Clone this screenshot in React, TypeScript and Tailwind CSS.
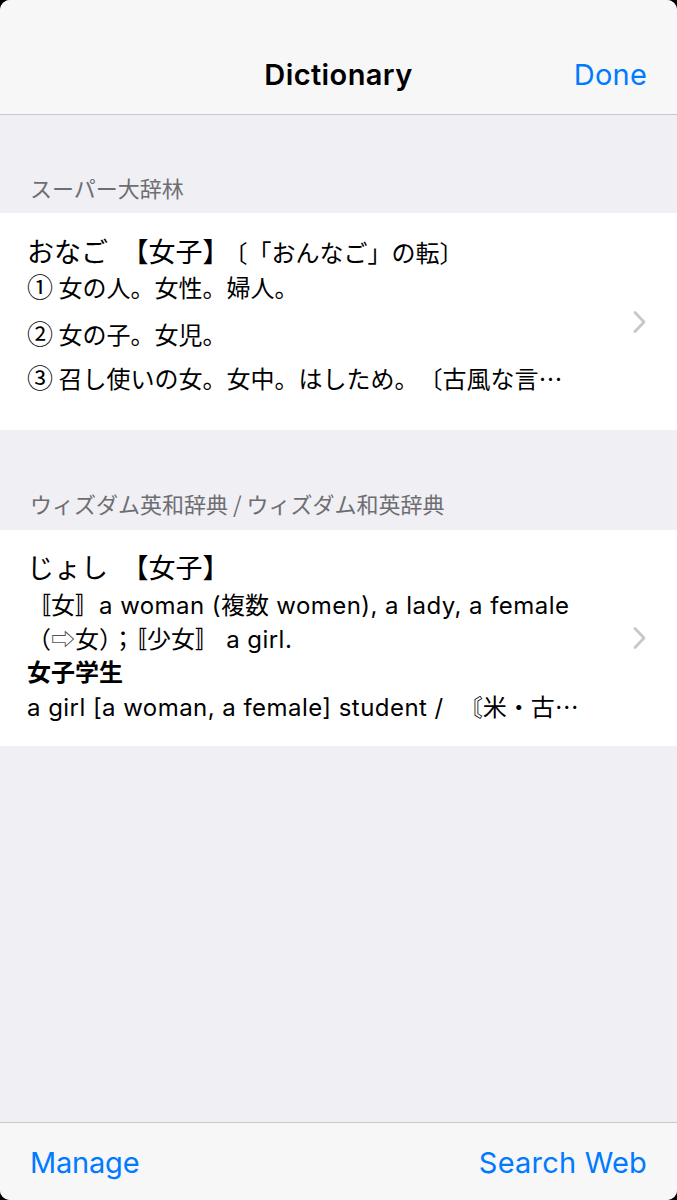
import React from "react";

const jp = { fontFamily: '"Noto Sans CJK JP", sans-serif', letterSpacing: "normal" } as const;

function Chevron() {
  return (
    <svg width="15" height="24" viewBox="0 0 15 24" fill="none" className="shrink-0">
      <path d="M3 2.5 L12 12 L3 21.5" stroke="#c7c7cc" strokeWidth="2.8" strokeLinecap="round" strokeLinejoin="round" />
    </svg>
  );
}

function Num({ n }: { n: string }) {
  return <span className="text-[26px] leading-[34px]">{n}</span>;
}

export default function App() {
  return (
    <div className="bg-black w-[677px] h-[1200px]" style={{ fontFamily: 'Inter, "Noto Sans CJK JP", sans-serif' }}>
      <div className="w-[677px] h-[1200px] rounded-[10px] overflow-hidden flex flex-col bg-[#efeff4]">
        {/* Nav bar */}
        <div className="h-[115px] shrink-0 bg-[#f7f7f8] border-b border-[#c8c7cc] grid grid-cols-[1fr_auto_1fr] items-center pt-[36px] px-[30px]">
          <div />
          <div className="text-[29px] font-semibold text-black tracking-[0.4px]">Dictionary</div>
          <div className="text-right text-[29px] text-[#007aff] tracking-[0.2px]">Done</div>
        </div>

        {/* Content */}
        <div className="flex-1 flex flex-col">
          <div className="h-[98px] flex items-end px-[30px] pb-[14px]">
            <span className="text-[22px] leading-[24px] text-[#6d6d72] [text-spacing-trim:space-all]" style={jp}>スーパー大辞林</span>
          </div>
          <div className="h-[217px] bg-white flex items-center pl-[27px] pr-[30px]">
            <div className="flex-1 self-start pt-[18px] text-black [text-spacing-trim:space-all]" style={jp}>
              <div className="h-[40px] leading-[40px] whitespace-nowrap">
                <span className="text-[27px]">おなご{"\u2002"}【女子】</span>
                <span className="text-[24px] -ml-[6px]">〔「おんなご」の転〕</span>
              </div>
              <div className="h-[34px] text-[24px] leading-[34px] whitespace-nowrap -mt-[2px]"><Num n="①" /> 女の人。女性。婦人。</div>
              <div className="h-[34px] text-[24px] leading-[34px] mt-[13px] whitespace-nowrap"><Num n="②" /> 女の子。女児。</div>
              <div className="h-[34px] text-[24px] leading-[34px] mt-[10px] whitespace-nowrap"><Num n="③" /> 召し使いの女。女中。はしため。〔古風な言…</div>
            </div>
            <Chevron />
          </div>

          <div className="h-[100px] flex items-end px-[30px] pb-[15px]">
            <span className="text-[22px] leading-[24px] text-[#6d6d72]" style={jp}>ウィズダム英和辞典 / ウィズダム和英辞典</span>
          </div>
          <div className="h-[216px] bg-white flex items-center pl-[27px] pr-[30px]">
            <div className="flex-1 self-start pt-[17px] text-black">
              <div className="h-[40px] leading-[40px] text-[27px] whitespace-nowrap [text-spacing-trim:space-all]" style={jp}>じょし{"\u2002"}【女子】</div>
              <div className="h-[34px] text-[24px] leading-[34px] whitespace-nowrap tracking-[0.45px]">
                <span style={jp}>〚女〛</span>a woman (<span style={jp}>複数</span> women), a lady, a female
              </div>
              <div className="h-[34px] text-[24px] leading-[34px] whitespace-nowrap tracking-[0.45px]">
                <span style={jp}>（<span className="text-[#555]">⇨</span>女）；〚少女〛</span> a girl.
              </div>
              <div className="h-[34px] text-[24px] leading-[34px] font-bold whitespace-nowrap -mt-[1px]" style={jp}>女子学生</div>
              <div className="h-[34px] text-[24px] leading-[34px] whitespace-nowrap tracking-[0.45px] mt-[1px]">
                a girl [a woman, a female] student / <span className="ml-[8px]" style={jp}>〘米・古…</span>
              </div>
            </div>
            <Chevron />
          </div>
        </div>

        {/* Toolbar */}
        <div className="h-[78px] shrink-0 bg-[#f7f7f8] border-t border-[#c8c7cc] flex items-center justify-between px-[30px] pt-[3px]">
          <span className="text-[29px] text-[#007aff] tracking-[-0.2px]">Manage</span>
          <span className="text-[29px] text-[#007aff] tracking-[0.2px]">Search Web</span>
        </div>
      </div>
    </div>
  );
}
